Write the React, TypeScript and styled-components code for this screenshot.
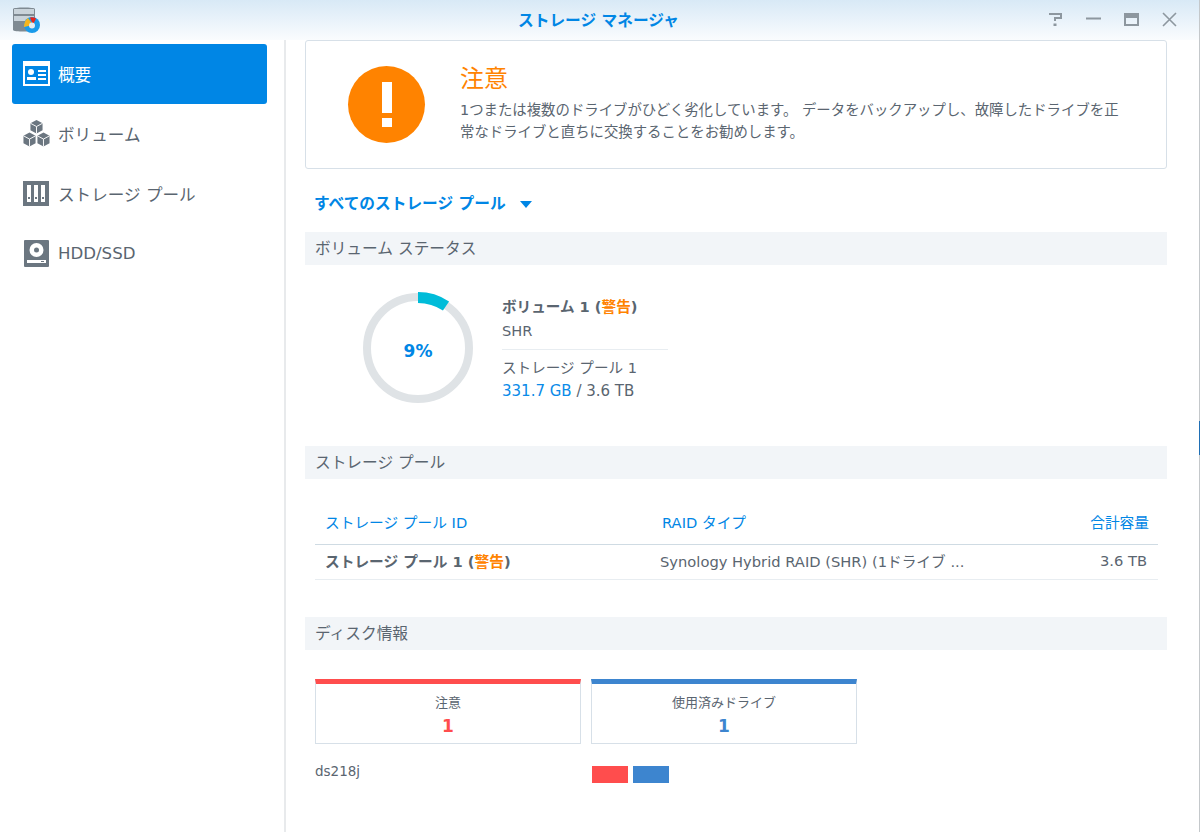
import styled, { createGlobalStyle } from 'styled-components'

const GlobalStyle = createGlobalStyle`
  html, body {
    margin: 0;
    padding: 0;
    background: #fff;
  }
  body {
    font-family: "DejaVu Sans", "Noto Sans CJK JP", sans-serif;
    color: #5a6570;
  }
  * {
    box-sizing: border-box;
  }
`

const Window = styled.div`
  width: 1200px;
  height: 832px;
  overflow: hidden;
  display: grid;
  grid-template-rows: 40px 1fr;
  border-right: 1px solid #c4c8cb;
  border-image: linear-gradient(#c4c8cb 0 421px, #1f6fb5 421px 455px, #c4c8cb 455px) 1;
`

const TitleBar = styled.header`
  position: relative;
  display: flex;
  align-items: center;
  justify-content: center;
  padding-bottom: 2px;
  background: linear-gradient(#d8e9f6, #fafcfe);
`

const Title = styled.h1`
  margin: 0 2px 0 0;
  font-size: 15.7px;
  font-weight: 700;
  color: #0086e5;
`

const AppLogo = styled.svg`
  position: absolute;
  left: 12px;
  top: 6px;
`

const WindowButtons = styled.div`
  position: absolute;
  right: 22px;
  top: 12px;
  display: flex;
  gap: 23px;
`

const Body = styled.div`
  display: grid;
  grid-template-columns: 286px 1fr;
  min-height: 0;
`

const Sidebar = styled.nav`
  padding: 4px 17px 0 12px;
  border-right: 2px solid #e8eaec;
  display: flex;
  flex-direction: column;
`

const NavItem = styled.div<{ $active?: boolean }>`
  height: 60px;
  padding: 0 0 1px 11px;
  display: flex;
  align-items: center;
  gap: 8px;
  font-size: 16.6px;
  border-radius: 3px;
  color: ${(p) => (p.$active ? '#fff' : '#5a6570')};
  background: ${(p) => (p.$active ? '#0086e5' : 'transparent')};
`

const NavIcon = styled.span`
  width: 27px;
  display: flex;
`

const Content = styled.main`
  padding: 0 32px 0 19px;
`

const AlertCard = styled.section`
  height: 129px;
  display: flex;
  gap: 35px;
  padding: 25px 42px 0;
  border: 1px solid #d7e0e8;
  border-radius: 3px;
`

const AlertIcon = styled.div`
  flex: none;
  width: 77px;
  height: 77px;
  border-radius: 50%;
  background: #ff8300;
  display: flex;
  flex-direction: column;
  align-items: center;
  justify-content: center;
  gap: 5px;
`

const AlertBar = styled.span<{ $h: number }>`
  width: 10px;
  height: ${(p) => p.$h}px;
  background: #fff;
`

const AlertBody = styled.div`
  margin-top: -2px;
`

const AlertTitle = styled.div`
  font-size: 24px;
  line-height: 30px;
  color: #ff8300;
`

const AlertText = styled.p`
  margin: 5px 0 0;
  font-size: 14.4px;
  line-height: 22px;
`

const PoolSelect = styled.div`
  height: 63px;
  padding: 4px 0 0 9px;
  display: flex;
  align-items: center;
  gap: 14px;
  font-size: 15.7px;
  font-weight: 700;
  color: #0086e5;
`

const Caret = styled.span`
  width: 0;
  height: 0;
  margin-top: 3px;
  border-left: 6px solid transparent;
  border-right: 6px solid transparent;
  border-top: 7px solid #0086e5;
`

const SectionHeader = styled.h2`
  margin: 0;
  height: 33px;
  padding: 0 0 3px 10px;
  display: flex;
  align-items: center;
  font-size: 15.7px;
  font-weight: 400;
  background: #f2f5f8;
`

const VolumeRow = styled.div`
  height: 181px;
  padding: 27px 0 0 57px;
  display: flex;
  gap: 28px;
`

const Ring = styled.div`
  position: relative;
  width: 112px;
  height: 112px;
`

const RingLabel = styled.span`
  position: absolute;
  inset: 6px 0 0;
  display: flex;
  align-items: center;
  justify-content: center;
  font-size: 17px;
  font-weight: 700;
  color: #0086e5;
`

const VolumeInfo = styled.div`
  width: 166px;
  padding-top: 4px;
  font-size: 14.6px;
  line-height: 22px;
`

const VolumeName = styled.div`
  font-weight: 700;
  height: 24px;
  white-space: nowrap;
`

const Warn = styled.span`
  color: #ff8300;
`

const VolumeType = styled.div`
  height: 30px;
  border-bottom: 1px solid #e8edf1;
`

const PoolName = styled.div`
  margin-top: 7px;
  white-space: nowrap;
`

const Capacity = styled.div`
  margin-top: 1px;
  font-size: 15px;
  white-space: nowrap;
`

const Blue = styled.span`
  color: #0a8be8;
`

const PoolTable = styled.div`
  height: 138px;
  padding: 28px 9px 0 10px;
  font-size: 14.7px;
`

const TableRow = styled.div<{ $head?: boolean }>`
  display: grid;
  grid-template-columns: 345px 1fr 110px;
  align-items: center;
  height: ${(p) => (p.$head ? 38 : 35)}px;
  padding-bottom: ${(p) => (p.$head ? 8 : 4)}px;
  border-bottom: 1px solid ${(p) => (p.$head ? '#cfdbe3' : '#e8edf1')};
  color: ${(p) => (p.$head ? '#0086e5' : 'inherit')};
`

const Cell = styled.div<{ $bold?: boolean; $indent?: number; $end?: number }>`
  padding-left: ${(p) => p.$indent ?? 0}px;
  padding-right: ${(p) => p.$end ?? 0}px;
  text-align: ${(p) => (p.$end ? 'right' : 'left')};
  font-weight: ${(p) => (p.$bold ? 700 : 400)};
  white-space: nowrap;
`

const DiskCards = styled.div`
  padding: 29px 0 0 10px;
  display: flex;
  gap: 10px;
`

const DiskCard = styled.div<{ $color: string }>`
  width: 266px;
  height: 65px;
  padding-top: 9px;
  border: 1px solid #d7e0e8;
  border-top: 5px solid ${(p) => p.$color};
  text-align: center;
  font-size: 13px;
  line-height: 20px;
`

const DiskCount = styled.div<{ $color: string }>`
  font-size: 17px;
  line-height: 26px;
  font-weight: 700;
  color: ${(p) => p.$color};
`

const DiskRow = styled.div`
  padding: 17px 0 0 10px;
  display: flex;
  align-items: flex-start;
  font-size: 13.5px;
  line-height: 20px;
`

const HostName = styled.div`
  width: 277px;
`

const DiskBlocks = styled.div`
  padding-top: 5px;
  display: flex;
  gap: 5px;
`

const DiskBlock = styled.span<{ $color: string }>`
  width: 36px;
  height: 17px;
  background: ${(p) => p.$color};
`

const RED = '#ff4d4d'
const BLUE = '#3d85cf'
const GREY = '#6b7680'

const OverviewIcon = () => (
  <svg width="27" height="25" viewBox="0 0 27 25">
    <path fill="#fff" fillRule="evenodd" d="M0 0h27v25H0zM2 5v18h23V5z" />
    <circle cx="8" cy="11" r="3" fill="#fff" />
    <path fill="#fff" d="M4 16h9v3H4zM15 9h8v2h-8zM15 13h8v2h-8zM15 17h8v2h-8z" />
  </svg>
)

const VolumeIcon = () => (
  <svg width="29" height="29" viewBox="0 0 29 29">
    <path fill={GREY} d="M14.5 0l6.500 3.500v7.500l-6.500 3.500L8 11V3.500zM7 13.500l6.500 3.500v8L7 28.500.5 25v-8zM22 13.500l6.500 3.500v8L22 28.500 15.500 25v-8z" />
    <path stroke="#fff" strokeWidth="1" fill="none" d="M8 3.500l6.500 3.500L21 3.500M14.500 7v7.500M.5 17L7 20.500l6.500-3.500M7 20.500v8M15.500 17L22 20.500l6.500-3.500M22 20.500v8" />
  </svg>
)

const PoolIcon = () => (
  <svg width="26" height="25" viewBox="0 0 26 25">
    <path fill={GREY} d="M0 0h26v25H0z" />
    <path fill="#fff" d="M4 4h4v17H4zM11 4h4v17h-4zM18 4h4v17h-4z" />
    <path fill={GREY} d="M5 16h2v2H5zM12 16h2v2h-2zM19 16h2v2h-2z" />
  </svg>
)

const DiskIcon = () => (
  <svg width="27" height="27" viewBox="-1 0 27 27">
    <rect width="25" height="27" rx="1" fill={GREY} />
    <circle cx="12.500" cy="10" r="7" fill="#fff" />
    <circle cx="12.500" cy="10" r="2.500" fill={GREY} />
    <path fill="#fff" d="M3 20h19v3H3z" />
    <path fill={GREY} d="M17 21h3v1h-3z" />
  </svg>
)

const App = () => (
  <Window>
    <GlobalStyle />
    <TitleBar>
      <AppLogo width="30" height="28" viewBox="0 0 30 28">
        <path fill="#7f8a92" d="M1 3c0-2 22-2 22 0v21c0 2-22 2-22 0z" />
        <path fill="#c9d3da" d="M2 3h20v5H2zM2 10h20v5H2z" />
        <circle cx="20" cy="19" r="8" fill="#1a9bea" />
        <path fill="#f7b51c" d="M16 12l5 7-9 2c0-4 1-7 4-9z" />
        <path fill="#e8241a" d="M18 11.500a8 8 0 0 1 6 1l-3 6z" />
        <circle cx="20" cy="19.500" r="3" fill="#e6ebef" />
      </AppLogo>
      <Title>ストレージ マネージャ</Title>
      <WindowButtons>
        <svg width="15" height="15" viewBox="0 0 15 15">
          <path fill="none" stroke="#8d979f" strokeWidth="2" d="M1 2h12v4H7v3" />
          <path fill="#8d979f" d="M5.500 11.500h3V14h-3z" />
        </svg>
        <svg width="15" height="15" viewBox="0 0 15 15">
          <path fill="#8d979f" d="M0 5.500h15v2H0z" />
        </svg>
        <svg width="15" height="15" viewBox="0 0 15 15">
          <path fill="#8d979f" fillRule="evenodd" d="M0 1h15v13H0zM2 6v6h11V6z" />
        </svg>
        <svg width="15" height="15" viewBox="0 0 15 15">
          <path fill="none" stroke="#8d979f" strokeWidth="1.600" d="M1 1l13 13M14 1L1 14" />
        </svg>
      </WindowButtons>
    </TitleBar>
    <Body>
      <Sidebar>
        <NavItem $active>
          <NavIcon>
            <OverviewIcon />
          </NavIcon>
          概要
        </NavItem>
        <NavItem>
          <NavIcon>
            <VolumeIcon />
          </NavIcon>
          ボリューム
        </NavItem>
        <NavItem>
          <NavIcon>
            <PoolIcon />
          </NavIcon>
          ストレージ プール
        </NavItem>
        <NavItem>
          <NavIcon>
            <DiskIcon />
          </NavIcon>
          HDD/SSD
        </NavItem>
      </Sidebar>
      <Content>
        <AlertCard>
          <AlertIcon>
            <AlertBar $h={31} />
            <AlertBar $h={9} />
          </AlertIcon>
          <AlertBody>
            <AlertTitle>注意</AlertTitle>
            <AlertText>
              1つまたは複数のドライブがひどく劣化しています。 データをバックアップし、故障したドライブを正常なドライブと直ちに交換することをお勧めします。
            </AlertText>
          </AlertBody>
        </AlertCard>
        <PoolSelect>
          すべてのストレージ プール
          <Caret />
        </PoolSelect>
        <SectionHeader>ボリューム ステータス</SectionHeader>
        <VolumeRow>
          <Ring>
            <svg width="112" height="112" viewBox="0 0 112 112">
              <circle cx="56" cy="56" r="51" fill="none" stroke="#dfe3e6" strokeWidth="8" />
              <path fill="none" stroke="#00bcd9" strokeWidth="11" d="M56 5.500A50.500 50.500 0 0 1 84 14" />
            </svg>
            <RingLabel>9%</RingLabel>
          </Ring>
          <VolumeInfo>
            <VolumeName>
              ボリューム 1 (<Warn>警告</Warn>)
            </VolumeName>
            <VolumeType>SHR</VolumeType>
            <PoolName>ストレージ プール 1</PoolName>
            <Capacity>
              <Blue>331.7 GB</Blue> / 3.6 TB
            </Capacity>
          </VolumeInfo>
        </VolumeRow>
        <SectionHeader>ストレージ プール</SectionHeader>
        <PoolTable>
          <TableRow $head>
            <Cell $indent={10}>ストレージ プール ID</Cell>
            <Cell $indent={2}>RAID タイプ</Cell>
            <Cell $end={9}>合計容量</Cell>
          </TableRow>
          <TableRow>
            <Cell $bold $indent={10}>
              ストレージ プール 1 (<Warn>警告</Warn>)
            </Cell>
            <Cell>Synology Hybrid RAID (SHR) (1ドライブ ...</Cell>
            <Cell $end={11}>3.6 TB</Cell>
          </TableRow>
        </PoolTable>
        <SectionHeader>ディスク情報</SectionHeader>
        <DiskCards>
          <DiskCard $color={RED}>
            注意
            <DiskCount $color={RED}>1</DiskCount>
          </DiskCard>
          <DiskCard $color={BLUE}>
            使用済みドライブ
            <DiskCount $color={BLUE}>1</DiskCount>
          </DiskCard>
        </DiskCards>
        <DiskRow>
          <HostName>ds218j</HostName>
          <DiskBlocks>
            <DiskBlock $color={RED} />
            <DiskBlock $color={BLUE} />
          </DiskBlocks>
        </DiskRow>
      </Content>
    </Body>
  </Window>
)

export default App
